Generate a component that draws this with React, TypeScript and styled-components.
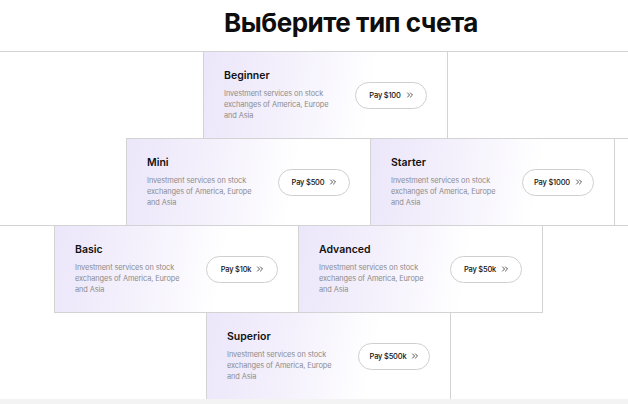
import React from 'react'
import styled, { createGlobalStyle } from 'styled-components'
import { ChevronsRight } from 'lucide-react'

const GlobalStyle = createGlobalStyle`
  html, body {
    margin: 0;
    padding: 0;
    background: #ffffff;
  }
  body {
    font-family: Inter, "Noto Sans", "DejaVu Sans", sans-serif;
    color: #111111;
  }
`

const Page = styled.div`
  width: 628px;
  height: 404px;
  overflow: hidden;
  display: flex;
  flex-direction: column;
`

const Header = styled.header`
  height: 51px;
  flex: none;
  box-sizing: content-box;
  border-bottom: 1px solid #d3d3d3;
  display: flex;
  justify-content: center;
  padding-left: 74px;
`

const Title = styled.h1`
  margin: 0;
  padding-top: 7px;
  font-size: 26px;
  line-height: 32px;
  font-weight: 700;
  letter-spacing: -0.5px;
  color: #0e0e0e;
`

const Row = styled.div<{ $offset: number; $ruled?: boolean }>`
  display: flex;
  flex: none;
  margin-top: -1px;
  padding-left: ${(p) => p.$offset}px;
  box-shadow: ${(p) => (p.$ruled ? 'inset 0 1px 0 #d3d3d3' : 'none')};
`

const Card = styled.div<{ $blank?: boolean }>`
  width: 245px;
  height: 88px;
  flex: none;
  box-sizing: border-box;
  border: 1px solid #d3d3d3;
  background: ${(p) =>
    p.$blank
      ? '#ffffff'
      : 'linear-gradient(100deg, #ece6fa 0%, #f4f1fc 35%, #ffffff 68%)'};
  display: flex;
  align-items: center;
  justify-content: space-between;
  padding: 0 20px 0 20px;

  & + & {
    margin-left: -1px;
  }
`

const Info = styled.div`
  display: flex;
  flex-direction: column;
  width: 118px;
`

const Name = styled.div`
  font-size: 10.5px;
  line-height: 13px;
  font-weight: 600;
  color: #111111;
  margin-bottom: 6px;
`

const Description = styled.p`
  margin: 0;
  font-size: 7.4px;
  line-height: 11px;
  color: #8c8c8c;
  letter-spacing: -0.1px;
`

const PayButton = styled.button`
  width: 72px;
  height: 27px;
  flex: none;
  box-sizing: border-box;
  border: 1px solid #cfcfcf;
  border-radius: 14px;
  background: #ffffff;
  display: flex;
  align-items: center;
  justify-content: center;
  gap: 4px;
  padding: 0 0 0 2px;
  font-family: inherit;
  font-size: 7.5px;
  font-weight: 500;
  color: #111111;
  letter-spacing: -0.2px;
  cursor: pointer;

  svg {
    color: #222222;
  }
`

const Footer = styled.div`
  flex: 1;
  margin-top: -1px;
  background: #f3f3f3;
`

type Plan = { name: string; price: string }

const DESC = 'Investment services on stock exchanges of America, Europe and Asia'

const rows: { offset: number; ruled?: boolean; plans: Plan[]; tail?: boolean }[] = [
  { offset: 203, plans: [{ name: 'Beginner', price: '$100' }] },
  {
    offset: 126,
    plans: [
      { name: 'Mini', price: '$500' },
      { name: 'Starter', price: '$1000' },
    ],
    tail: true,
  },
  {
    offset: 54,
    ruled: true,
    plans: [
      { name: 'Basic', price: '$10k' },
      { name: 'Advanced', price: '$50k' },
    ],
  },
  { offset: 206, plans: [{ name: 'Superior', price: '$500k' }] },
]

function PlanCard({ plan }: { plan: Plan }) {
  return (
    <Card>
      <Info>
        <Name>{plan.name}</Name>
        <Description>{DESC}</Description>
      </Info>
      <PayButton type="button">
        Pay {plan.price}
        <ChevronsRight size={10} strokeWidth={1.8} />
      </PayButton>
    </Card>
  )
}

export default function App() {
  return (
    <>
      <GlobalStyle />
      <Page>
        <Header>
          <Title>Выберите тип счета</Title>
        </Header>
        {rows.map((row, i) => (
          <Row key={i} $offset={row.offset} $ruled={row.ruled}>
            {row.plans.map((plan) => (
              <PlanCard key={plan.name} plan={plan} />
            ))}
            {row.tail && <Card $blank />}
          </Row>
        ))}
        <Footer />
      </Page>
    </>
  )
}
